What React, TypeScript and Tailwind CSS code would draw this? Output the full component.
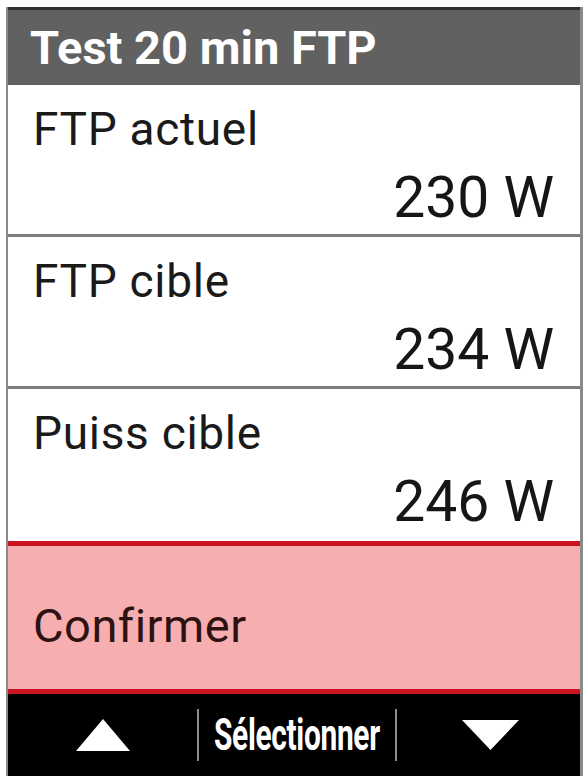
const font = { fontFamily: 'Roboto, "Liberation Sans", sans-serif' };

type Row = { label: string; value: string };

const rows: Row[] = [
  { label: 'FTP actuel', value: '230 W' },
  { label: 'FTP cible', value: '234 W' },
  { label: 'Puiss cible', value: '246 W' },
];

function Field({ row, last }: { row: Row; last: boolean }) {
  return (
    <div
      className={`flex flex-col h-[152px] pt-[21px] pl-[25px] pr-[26px] ${
        last ? '' : 'border-b-[3px] border-[#7d7d7d]'
      }`}
    >
      <div className="text-[46px] leading-none tracking-[0.7px] text-[#1a1a1a]">{row.label}</div>
      <div className="mt-[17px] self-end text-[57px] leading-none text-[#161616]">{row.value}</div>
    </div>
  );
}

export default function App() {
  return (
    <div className="w-[587px] h-[776px] bg-white pt-[7px] pl-[6px] pr-[4px] overflow-hidden" style={font}>
      <div className="h-full flex flex-col border-l-2 border-r-[3px] border-[#8a8a8a]">
        {/* title bar */}
        <div className="h-[78px] shrink-0 bg-[#616161] border-t-[3px] border-[#303030] flex items-center pl-[22px]">
          <span className="text-[47px] font-bold leading-none text-white">Test 20 min FTP</span>
        </div>

        {rows.map((r, i) => (
          <Field key={r.label} row={r} last={i === rows.length - 1} />
        ))}

        {/* selected item */}
        <div className="h-[153px] shrink-0 bg-[#f7aeb0] border-y-[5px] border-[#cc1420] pt-[56px] pl-[25px]">
          <span className="text-[47px] leading-none tracking-[0.5px] text-[#2e1212]">Confirmer</span>
        </div>

        {/* soft keys */}
        <div className="flex-1 bg-black flex items-center">
          <div className="w-[189px] flex justify-center">
            <svg width="54" height="32" viewBox="0 0 54 32">
              <polygon points="27,0 54,32 0,32" fill="white" />
            </svg>
          </div>
          <div className="w-[2px] h-[52px] bg-[#8c8c8c]" />
          <div className="w-[196px] flex justify-center overflow-visible">
            <span className="inline-block text-[44px] font-bold leading-none text-white tracking-[-0.5px] scale-x-[0.68] whitespace-nowrap">
              Sélectionner
            </span>
          </div>
          <div className="w-[2px] h-[52px] bg-[#8c8c8c]" />
          <div className="flex-1 flex justify-center pl-[4px]">
            <svg width="57" height="30" viewBox="0 0 57 30">
              <polygon points="0,0 57,0 28.5,30" fill="white" />
            </svg>
          </div>
        </div>
      </div>
    </div>
  );
}
